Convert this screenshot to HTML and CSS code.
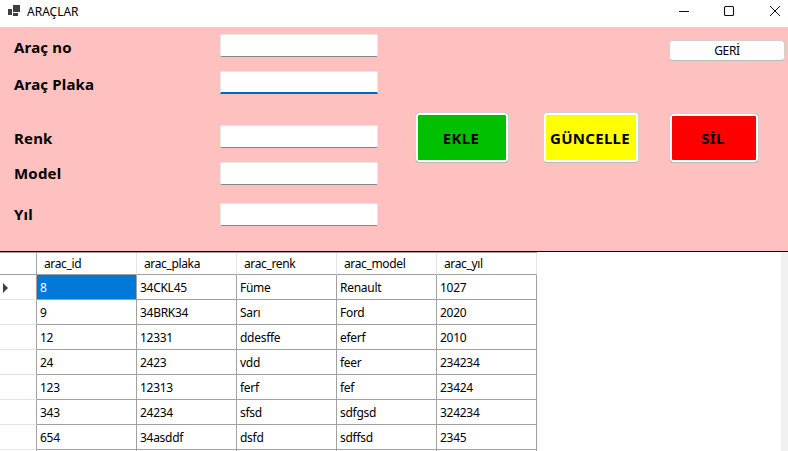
FILE: index.html
```html
<!DOCTYPE html>
<html lang="tr">
<head>
<meta charset="utf-8">
<title>ARAÇLAR</title>
<link rel="stylesheet" href="styles.css">
</head>
<body>
<div class="window">
  <header class="titlebar">
    <svg class="app-icon" width="13" height="12" viewBox="0 0 13 12"><path fill="#404040" d="M5 0h7v7H5zM0 4h4v6H0zM5 8h5v3H5z"/></svg>
    <span class="caption">ARAÇLAR</span>
    <svg class="controls" width="110" height="20" viewBox="0 0 110 20" fill="none" stroke="#111"><path d="M1 6.500h10" stroke-width="1"/><rect x="46.500" y="1.500" width="9" height="9" rx="1" stroke-width="1.100"/><path d="M92 1l10 10M102 1L92 11" stroke-width="1"/></svg>
  </header>
  <main class="form">
    <div class="fields">
      <div class="field"><label>Araç no</label><div class="box"></div></div>
      <div class="field"><label>Araç Plaka</label><div class="box focused"></div></div>
      <div class="field spaced"><label>Renk</label><div class="box"></div></div>
      <div class="field"><label class="raised">Model</label><div class="box"></div></div>
      <div class="field last"><label class="raised">Yıl</label><div class="box"></div></div>
    </div>
    <div class="side">
      <button class="back"><span>GERİ</span></button>
      <div class="actions">
        <button class="action add">EKLE</button>
        <button class="action update">GÜNCELLE</button>
        <button class="action delete">SİL</button>
      </div>
    </div>
  </main>
  <section class="data">
    <div class="grid">
      <div class="row head"><i></i><b>arac_id</b><b>arac_plaka</b><b>arac_renk</b><b>arac_model</b><b>arac_yıl</b></div>
      <div class="row"><i><svg width="5" height="10" viewBox="0 0 5 10"><path d="M0 0l5 5-5 5z" fill="#404040"/></svg></i><span class="selected">8</span><span>34CKL45</span><span>Füme</span><span>Renault</span><span>1027</span></div>
      <div class="row"><i></i><span>9</span><span>34BRK34</span><span>Sarı</span><span>Ford</span><span>2020</span></div>
      <div class="row"><i></i><span>12</span><span>12331</span><span>ddesffe</span><span>eferf</span><span>2010</span></div>
      <div class="row"><i></i><span>24</span><span>2423</span><span>vdd</span><span>feer</span><span>234234</span></div>
      <div class="row"><i></i><span>123</span><span>12313</span><span>ferf</span><span>fef</span><span>23424</span></div>
      <div class="row"><i></i><span>343</span><span>24234</span><span>sfsd</span><span>sdfgsd</span><span>324234</span></div>
      <div class="row"><i></i><span>654</span><span>34asddf</span><span>dsfd</span><span>sdffsd</span><span>2345</span></div>
      <div class="row"><i></i><span></span><span></span><span></span><span></span><span></span></div>
    </div>
    <div class="scroll"></div>
  </section>
</div>
</body>
</html>
```
FILE: styles.css
```css
* { box-sizing: border-box; }
body { margin: 0; background: #fff; color: #000; font-family: "Noto Sans", "Open Sans", sans-serif; font-size: 12px; overflow: hidden; }
.window { width: 788px; height: 451px; display: flex; flex-direction: column; overflow: hidden; }
.titlebar { flex: none; height: 27px; display: flex; align-items: flex-start; padding: 5px 0 0 8px; }
.app-icon { flex: none; }
.caption { margin-left: 6px; line-height: 14px; letter-spacing: 0; }
.controls { margin-left: auto; }
.form { flex: none; height: 225px; display: flex; background: #ffc0c0; border-bottom: 1px solid #000; }
.fields { width: 378px; padding: 7px 0 0 14px; display: flex; flex-direction: column; gap: 14px; }
.field { display: flex; height: 23px; }
.field.spaced { margin-top: 17px; }
.field.last { margin-top: 4px; }
.field label { width: 206px; padding-top: 2px; line-height: 22px; font-size: 15px; font-weight: 700; letter-spacing: 0.18px; }
.field label.raised { padding-top: 0; }
.box { width: 158px; height: 23px; background: #fff; border: 1px solid #e9e6e6; border-bottom-color: #868686; border-radius: 2px; }
.box.focused { border-bottom: 2px solid #0067c0; border-radius: 2px 2px 0 0; }
.side { flex: 1; display: flex; flex-direction: column; }
button { font-family: inherit; color: #000; padding: 0; border: 1px solid #d0d0d0; border-bottom-color: #b8bcbc; border-radius: 4px; background: #fdfdfd; }
.back { align-self: flex-end; width: 116px; height: 21px; margin: 13px 3px 0 0; font-size: 12px; line-height: 19px; letter-spacing: -0.3px; }
.actions { display: flex; align-items: flex-end; margin: 51px 0 0 37px; }
.action { height: 51px; font-size: 15px; font-weight: 700; letter-spacing: 0.3px; border-radius: 4px; box-shadow: inset 0 0 0 2px #fff; white-space: nowrap; }
.add { width: 94px; padding-right: 2px; background: #00c000; }
.update { width: 96px; padding-right: 2px; margin-left: 34px; background: #ff0; }
.delete { width: 90px; height: 50px; padding: 0 2px 1px 0; margin-left: 30px; background: red; }
.data { flex: 1; min-height: 0; display: flex; overflow: hidden; }
.grid { width: 537px; border-top: 1px solid #a0a0a0; }
.row { display: grid; grid-template-columns: 37px repeat(5, 100px); grid-template-rows: 25px; height: 25px; line-height: 26px; }
.row span { padding-left: 3px; border-right: 1px solid #a0a0a0; border-bottom: 1px solid #a0a0a0; letter-spacing: -0.28px; }
.row i { display: flex; align-items: center; padding: 2px 0 0 3px; border-right: 1px solid #a0a0a0; border-bottom: 1px solid #e3e3e3; }
.row .selected { background: #0078d7; color: #fff; }
.row.head { height: 22px; grid-template-rows: 22px; line-height: 22px; }
.head i { border-bottom-color: #a0a0a0; }
.head b { padding-left: 7px; font-weight: 400; letter-spacing: -0.36px; border-bottom: 1px solid #a0a0a0; border-right: 1px solid #e5e5e5; }
.scroll { width: 7px; margin-left: auto; background: #f0f0f0; }
```
